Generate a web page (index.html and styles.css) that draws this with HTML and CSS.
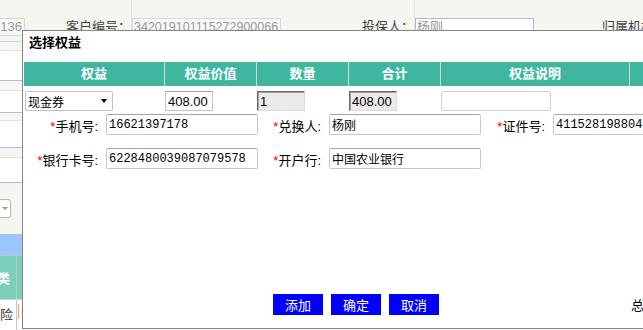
FILE: index.html
```html
<!DOCTYPE html>
<html lang="zh-CN">

<head>
	<meta charset="UTF-8">
	<meta name="viewport" content="width=device-width, initial-scale=1.0">
	<title>选择权益</title>
	<link rel="stylesheet" href="styles.css">
</head>

<body>
	<div class="page">
		<div class="top-row">
			<div class="cell c1">
				<span class="cut-input">2136</span>
				<span class="lbl l1">客户编号：</span>
			</div>
			<div class="cell c2">
				<span class="ro-input wide">342019101115272900066</span>
				<span class="lbl l2">投保人：</span>
			</div>
			<div class="cell c3">
				<span class="ro-input blue">杨刚</span>
				<span class="lbl l3">归属机构：</span>
			</div>
		</div>
		<div class="band gray h9"></div>
		<div class="band white h30"></div>
		<div class="band gray h10"></div>
		<div class="band white h22"></div>
		<div class="band gray h8"></div>
		<div class="band white h27"></div>
		<div class="band gray h10"></div>
		<div class="band white h25"></div>
		<div class="band gray h51">
			<div class="bg-select"><span class="bg-arrow"></span></div>
		</div>
		<div class="band sky"></div>
		<div class="grid-row teal">
			<div class="gc1">种类</div>
			<div class="gc2"></div>
		</div>
		<div class="grid-row plain">
			<div class="gc1 dark">保险</div>
			<div class="gc2"><span class="mark">P</span></div>
		</div>
	</div>

	<div class="dialog">
		<div class="dlg-title">选择权益</div>

		<div class="grid-table">
			<div class="th">权益</div>
			<div class="th">权益价值</div>
			<div class="th">数量</div>
			<div class="th">合计</div>
			<div class="th">权益说明</div>
			<div class="th"></div>

			<div class="td">
				<div class="sel">现金券<span class="arrow"></span></div>
			</div>
			<div class="td"><input class="in num" type="text" value="408.00"></div>
			<div class="td"><input class="in num off" type="text" value="1" disabled></div>
			<div class="td"><input class="in num off" type="text" value="408.00" disabled></div>
			<div class="td"><input class="in desc" type="text"></div>
			<div class="td"></div>
		</div>

		<div class="form">
			<label class="flbl"><i>*</i>手机号:</label>
			<input class="fin" type="text" value="16621397178">
			<label class="flbl"><i>*</i>兑换人:</label>
			<input class="fin" type="text" value="杨刚">
			<label class="flbl"><i>*</i>证件号:</label>
			<input class="fin" type="text" value="411528198804046515">

			<label class="flbl"><i>*</i>银行卡号:</label>
			<input class="fin" type="text" value="6228480039087079578">
			<label class="flbl"><i>*</i>开户行:</label>
			<input class="fin" type="text" value="中国农业银行">
		</div>

		<div class="actions">
			<button>添加</button>
			<button>确定</button>
			<button>取消</button>
			<span class="total">总</span>
		</div>
	</div>
</body>

</html>
```

FILE: styles.css
```css
body {
	margin: 0;
	width: 643px;
	height: 330px;
	overflow: hidden;
	position: relative;
	background-color: #f6f6f0;
	font-family: "Liberation Sans", "Noto Sans CJK SC", sans-serif;
	font-size: 13px;
	color: #000;
}

/* page behind the dialog */
.page {
	width: 643px;
}

.top-row {
	display: flex;
	height: 42px;
	box-sizing: border-box;
	border-bottom: 1px solid #c9d5e2;
}

.cell {
	display: flex;
	align-items: flex-start;
	padding-top: 18px;
	box-sizing: border-box;
}

.c1 {
	width: 132px;
}

.c2 {
	width: 283px;
	border-left: 1px solid #e4e4dc;
}

.c3 {
	flex: 1;
	border-left: 1px solid #e4e4dc;
}

.cut-input {
	display: flex;
	justify-content: flex-end;
	overflow: hidden;
	width: 25px;
	height: 18px;
	box-sizing: border-box;
	border: 1px solid #d3d7dc;
	border-left: none;
	padding-right: 2px;
	line-height: 16px;
	color: #9a9a9a;
	background: #f8f8f6;
	white-space: nowrap;
}

.ro-input {
	height: 18px;
	box-sizing: border-box;
	border: 1px solid #d6d9dc;
	padding-left: 1px;
	line-height: 16px;
	color: #9a9a9a;
	background: #f8f8f6;
	white-space: nowrap;
	overflow: hidden;
}

.wide {
	width: 151px;
	font-size: 12.5px;
}

.blue {
	width: 119px;
	border-color: #a9bcd3;
	background: #fff;
}

.lbl {
	line-height: 18px;
	color: #444;
	white-space: nowrap;
}

.l1 {
	margin-left: 41px;
}

.l2 {
	margin-left: 81px;
}

.l3 {
	margin-left: 68px;
}

.band {
	box-sizing: border-box;
	border-bottom: 1px solid #e2e2da;
}

.band.white {
	background: #fff;
	border-bottom-color: #a9bfd6;
}

.h8 { height: 8px; }
.h9 { height: 9px; }
.h10 { height: 10px; }
.h22 { height: 22px; }
.h25 { height: 25px; }
.h27 { height: 27px; }
.h30 { height: 30px; }

.h51 {
	height: 51px;
	padding-top: 16px;
	border-bottom: none;
}

.bg-select {
	display: flex;
	align-items: center;
	width: 11px;
	height: 19px;
	box-sizing: border-box;
	border: 1px solid #b4b4b4;
	border-left: none;
	border-radius: 0 3px 3px 0;
	background: #fff;
}

.bg-arrow {
	margin-left: 2px;
	border-left: 3px solid transparent;
	border-right: 3px solid transparent;
	border-top: 3px solid #9a9a9a;
}

.band.sky {
	height: 22px;
	background: #9ec6fe;
	border-bottom: 1px solid #c6c6c6;
}

.grid-row {
	display: flex;
}

.grid-row.teal {
	height: 43px;
	background: #7ccfbb;
	border-bottom: 1px solid #d0d0d0;
	color: #fff;
	font-weight: bold;
}

.grid-row.plain {
	height: 32px;
	background: #fff;
}

.gc1 {
	display: flex;
	justify-content: flex-end;
	align-items: center;
	overflow: hidden;
	width: 17px;
	box-sizing: border-box;
	padding-right: 6px;
	border-right: 1px solid #c8c8c8;
	white-space: nowrap;
}

.gc1.dark {
	align-items: flex-start;
	padding-top: 4px;
	padding-right: 3px;
	color: #333;
	font-weight: normal;
}

.gc2 {
	flex: 1;
	padding-top: 4px;
}

.mark {
	display: inline-block;
	margin-left: 1px;
	padding-left: 2px;
	border-left: 1px solid #f0a848;
	color: #555;
}

/* dialog */
.dialog {
	position: absolute;
	left: 22px;
	top: 30px;
	width: 680px;
	height: 297px;
	background: #fff;
	border: 1px solid #858585;
	border-right: none;
}

.dlg-title {
	height: 31px;
	padding-left: 6px;
	font-weight: bold;
	line-height: 23px;
}

.grid-table {
	display: grid;
	grid-template-columns: 140px 92px 92px 92px 189px 1fr;
	margin-left: 1px;
}

.th {
	height: 24px;
	line-height: 24px;
	background: #3fb7a0;
	color: #fff;
	font-weight: bold;
	text-align: center;
	box-sizing: border-box;
}

.th + .th {
	border-left: 1px solid #d4d8d6;
}

.td {
	padding: 5px 0 0 1px;
}

.sel {
	display: flex;
	align-items: center;
	width: 88px;
	height: 20px;
	box-sizing: border-box;
	padding-left: 2px;
	border: 1px solid #c4c4c4;
	border-radius: 2px;
	font-size: 12px;
}

.arrow {
	margin-left: auto;
	margin-right: 5px;
	border-left: 3px solid transparent;
	border-right: 3px solid transparent;
	border-top: 4px solid #000;
}

.in {
	height: 20px;
	box-sizing: border-box;
	margin: 0;
	padding: 0 2px;
	border: 1px solid #c3c6ca;
	border-top-color: #a8a8a8;
	font-family: "Liberation Sans", sans-serif;
	font-size: 13px;
	color: #000;
	outline: none;
}

.num {
	width: 48px;
}

.off {
	background: #ebebeb;
	border-color: #6a6a6a #dcdcdc #dcdcdc #6a6a6a;
	box-shadow: inset 1px 1px 0 #a0a0a0;
	-webkit-text-fill-color: #000;
	opacity: 1;
}

.desc {
	width: 110px;
	border-color: #cfd3d8;
	border-radius: 2px;
}

.form {
	display: grid;
	grid-template-columns: 82px 152px 71px 152px 72px 152px;
	row-gap: 13px;
	align-items: center;
	margin-top: 3px;
	margin-left: 1px;
}

.flbl {
	height: 21px;
	box-sizing: border-box;
	padding-top: 4px;
	padding-right: 8px;
	line-height: 17px;
	text-align: right;
	white-space: nowrap;
}

.flbl i {
	font-style: normal;
	color: #f00;
}

.fin {
	height: 21px;
	box-sizing: border-box;
	margin: 0;
	padding: 0 2px;
	border: 1px solid #c6cacf;
	border-top-color: #a6a6a6;
	border-radius: 2px;
	font-family: "Liberation Mono", "Noto Sans CJK SC", monospace;
	font-size: 12px;
	color: #000;
	outline: none;
}

.actions {
	display: flex;
	align-items: center;
	gap: 8px;
	margin-top: 125px;
	padding-left: 250px;
}

button {
	width: 50px;
	height: 21px;
	padding: 0;
	border: none;
	background: #0000ff;
	color: #fff;
	font-family: "Noto Sans CJK SC", sans-serif;
	font-size: 13px;
	cursor: pointer;
}

.total {
	margin-left: 184px;
}
```
